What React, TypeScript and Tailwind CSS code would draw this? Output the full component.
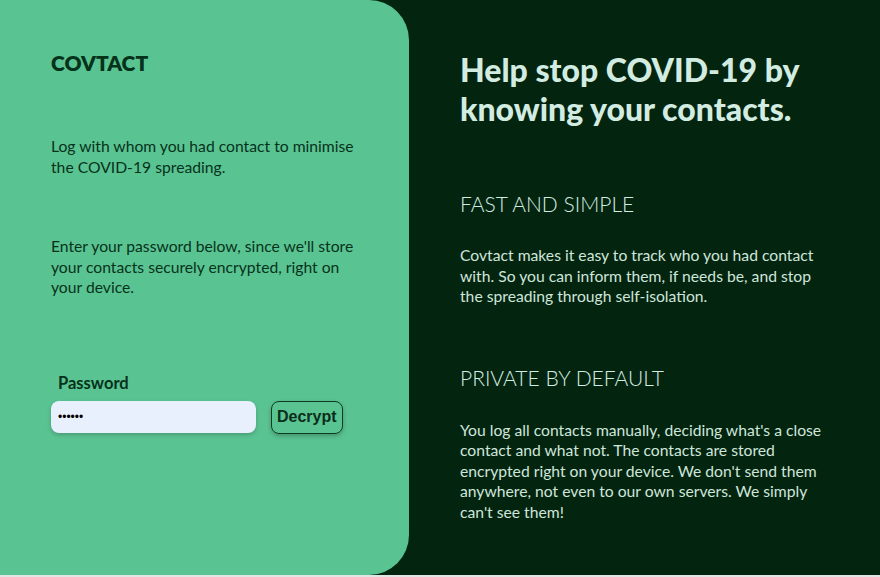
export default function App() {
  return (
    <div className="w-[880px] h-[577px] bg-[#dfe6e3] font-['Lato',sans-serif]">
      <div className="flex h-[575px] bg-[#03240f]">
        <section className="w-[409px] shrink-0 bg-[#5ac392] rounded-r-[40px] pl-[51px] pr-[46px] text-[#06321a]">
          <h1 className="mt-[50px] text-[21px] leading-[26px] font-extrabold">COVTACT</h1>
          <p className="mt-[60px] text-[15.7px] leading-[20.5px]">
            Log with whom you had contact to minimise the COVID-19 spreading.
          </p>
          <p className="mt-[59px] text-[15.7px] leading-[20.5px]">
            Enter your password below, since we'll store your contacts securely encrypted, right on your device.
          </p>
          <label className="block mt-[76px] ml-[7px] text-[16.5px] leading-[18px] font-bold">Password</label>
          <div className="mt-[9px] flex items-center gap-[15px]">
            <input
              type="password"
              defaultValue="secret"
              className="w-[205px] h-[32px] rounded-[8px] bg-[#e8f0fe] px-[7px] font-['Liberation_Sans',sans-serif] text-[12px] text-black shadow-[0_2px_4px_rgba(0,0,0,0.2)] outline-none"
            />
            <button className="h-[33px] px-[5px] rounded-[8px] border border-[#0d3a22] text-[16px] font-bold font-['Liberation_Sans',sans-serif] text-[#0a2e19] shadow-[0_2px_4px_rgba(0,0,0,0.25)]">
              Decrypt
            </button>
          </div>
        </section>
        <section className="flex-1 pl-[51px] pr-[50px] text-[#d3ece1]">
          <h2 className="mt-[50px] text-[32px] leading-[39px] font-black">
            Help stop COVID-19 by knowing your contacts.
          </h2>
          <h3 className="mt-[63px] text-[21px] leading-[26px] font-light">FAST AND SIMPLE</h3>
          <p className="mt-[28px] text-[15.7px] leading-[20.5px] text-[#cfe6db]">
            Covtact makes it easy to track who you had contact with. So you can inform them, if needs be, and stop the spreading through self-isolation.
          </p>
          <h3 className="mt-[58px] text-[21px] leading-[26px] font-light">PRIVATE BY DEFAULT</h3>
          <p className="mt-[29px] text-[15.7px] leading-[20.5px] text-[#cfe6db]">
            You log all contacts manually, deciding what's a close contact and what not. The contacts are stored encrypted right on your device. We don't send them anywhere, not even to our own servers. We simply can't see them!
          </p>
        </section>
      </div>
    </div>
  );
}
